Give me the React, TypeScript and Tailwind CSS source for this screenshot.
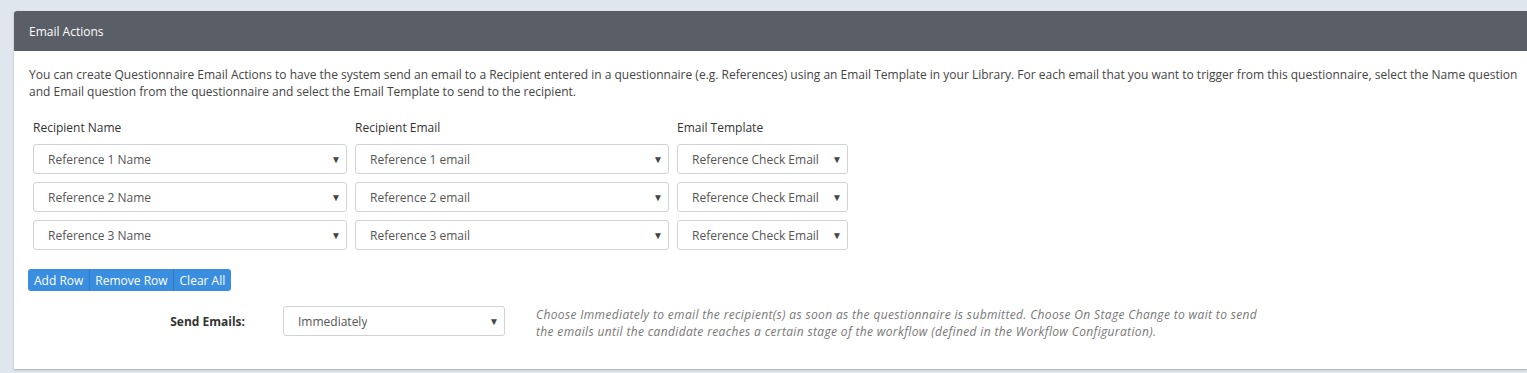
const rows = [
  { name: 'Reference 1 Name', email: 'Reference 1 email', template: 'Reference Check Email' },
  { name: 'Reference 2 Name', email: 'Reference 2 email', template: 'Reference Check Email' },
  { name: 'Reference 3 Name', email: 'Reference 3 email', template: 'Reference Check Email' },
];

function Select({ value, width }: { value: string; width: string }) {
  return (
    <div
      className={`${width} h-[30px] flex items-center justify-between bg-white border border-[#cfd2d6] rounded-[3px] pl-[14px] pr-[5px] text-[#555]`}
    >
      <span className="truncate">{value}</span>
      <span className="text-[10px] text-[#444] leading-none">▼</span>
    </div>
  );
}

export default function App() {
  return (
    <div
      className="min-h-[373px] bg-[#dfe6ee] pt-[11px] pl-[14px] text-[12px] leading-[17px] text-[#333]"
      style={{ fontFamily: '"Open Sans", "Liberation Sans", sans-serif' }}
    >
      <div className="bg-white rounded-tl-[3px] shadow-[0_1px_2px_rgba(0,0,0,0.25)] h-[358px]">
        <div className="h-[40px] bg-[#5a5e66] text-white flex items-center pl-[15px] rounded-tl-[3px]">
          Email Actions
        </div>
        <div className="pt-[15px] pl-[15px] pr-[8px]">
          <p className="text-[#444]">
            You can create Questionnaire Email Actions to have the system send an email to a Recipient entered in a
            questionnaire (e.g. References) using an Email Template in your Library. For each email that you want to
            trigger from this questionnaire, select the Name question and Email question from the questionnaire and
            select the Email Template to send to the recipient.
          </p>

          <div className="ml-[4px] mt-[19px]">
            <div className="flex gap-[8px] mb-[8px]">
              <div className="w-[314px]">Recipient Name</div>
              <div className="w-[314px]">Recipient Email</div>
              <div className="w-[171px]">Email Template</div>
            </div>
            <div className="flex flex-col gap-[8px]">
              {rows.map((r) => (
                <div key={r.name} className="flex gap-[8px]">
                  <Select value={r.name} width="w-[314px]" />
                  <Select value={r.email} width="w-[314px]" />
                  <Select value={r.template} width="w-[171px]" />
                </div>
              ))}
            </div>
          </div>

          <div className="mt-[19px] -ml-[1px] inline-flex h-[22px] text-white rounded-[3px] overflow-hidden">
            <button className="px-[6px] bg-[#3a8ee0] border-r border-[#2f78c2]">Add Row</button>
            <button className="px-[5px] bg-[#3a8ee0] border-r border-[#2f78c2]">Remove Row</button>
            <button className="px-[6px] bg-[#3a8ee0]">Clear All</button>
          </div>

          <div className="mt-[15px] flex items-start">
            <div className="w-[216px] h-[30px] flex items-center justify-end font-bold text-[#333]">Send Emails:</div>
            <div className="ml-[38px]">
              <Select value="Immediately" width="w-[222px]" />
            </div>
            <p className="ml-[31px] w-[730px] italic text-[#777] tracking-[0.35px]">
              Choose Immediately to email the recipient(s) as soon as the questionnaire is submitted. Choose On Stage
              Change to wait to send the emails until the candidate reaches a certain stage of the workflow (defined in
              the Workflow Configuration).
            </p>
          </div>
        </div>
      </div>
    </div>
  );
}
